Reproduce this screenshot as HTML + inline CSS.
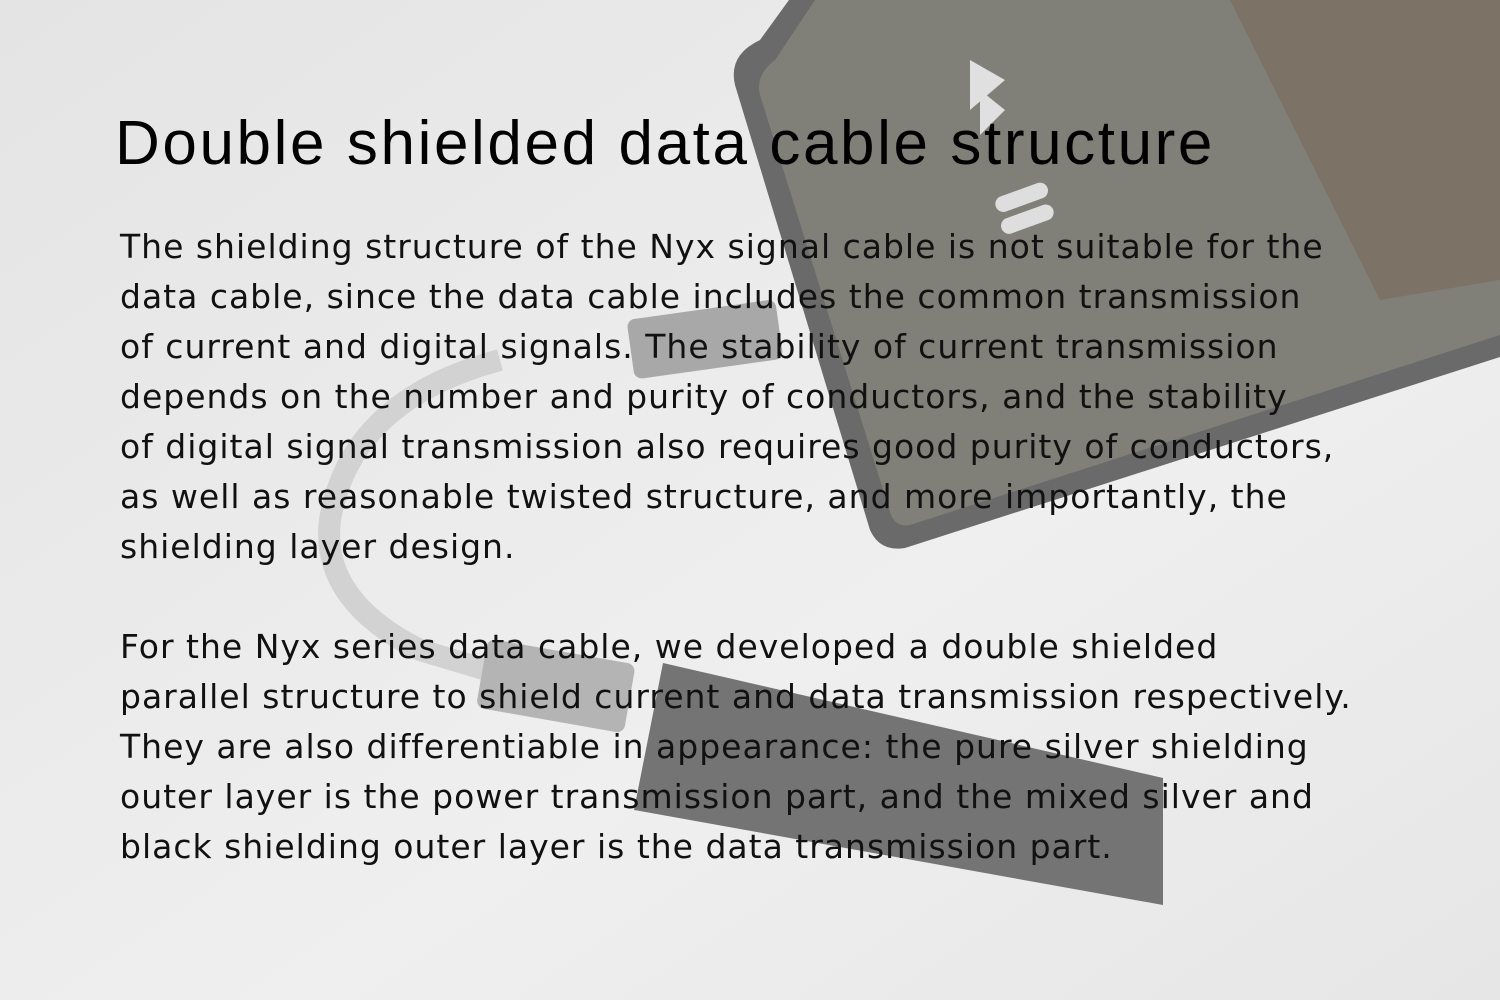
<!DOCTYPE html>
<html><head><meta charset="utf-8"><style>
html,body{margin:0;padding:0}
body{width:1500px;height:1000px;position:relative;overflow:hidden;background:#ebebeb}
svg{position:absolute;left:0;top:0}
h1{position:absolute;left:115px;top:108px;margin:0;font-family:"Liberation Sans",sans-serif;font-weight:normal;font-size:62px;color:#000;white-space:nowrap;letter-spacing:2.6px}
.t{position:absolute;left:120px;font-family:"DejaVu Sans","Liberation Sans",sans-serif;font-size:33px;line-height:50px;color:#111;white-space:pre;letter-spacing:1px}
</style></head><body>
<svg width="1500" height="1000">
<defs><linearGradient id="bg" x1="0" y1="0" x2="1" y2="1"><stop offset="0" stop-color="#e4e4e4"/><stop offset="0.6" stop-color="#efefef"/><stop offset="1" stop-color="#e6e6e6"/></linearGradient></defs>
<rect width="1500" height="1000" fill="url(#bg)"/>
<path d="M789,0 L1500,0 L1500,357 L905,548 Q880,552 870,530 L735,85 Q728,55 760,40 Z" fill="#6a6a6a"/>
<path d="M815,0 L1500,0 L1500,335 L910,525 Q895,528 890,512 L760,95 Q755,75 775,60 Z" fill="#807f78"/>
<path d="M1230,0 L1500,0 L1500,280 L1380,300 Z" fill="#7d7266"/>
<path d="M500,360 Q350,400 330,520 Q320,600 420,650 L520,680" stroke="#d2d2d2" stroke-width="22" fill="none"/>
<rect x="630" y="310" width="150" height="60" rx="8" fill="#a8a8a8" transform="rotate(-8 700 340)"/>
<path d="M663,663 L1163,778 L1163,905 L634,810 Z" fill="#747474"/>
<rect x="480" y="650" width="150" height="70" rx="8" fill="#b4b4b4" transform="rotate(10 550 690)"/>
<path d="M970,60 L1005,80 L970,110 Z M980,90 L1005,110 L980,135 Z" fill="#e0e0e0"/>
<rect x="995" y="190" width="55" height="16" rx="8" fill="#dedede" transform="rotate(-20 1020 200)"/>
<rect x="1000" y="212" width="55" height="16" rx="8" fill="#dedede" transform="rotate(-20 1025 220)"/>
</svg>
<h1>Double shielded data cable structure</h1>
<div class="t" style="top:222px">The shielding structure of the Nyx signal cable is not suitable for the
data cable, since the data cable includes the common transmission
of current and digital signals. The stability of current transmission
depends on the number and purity of conductors, and the stability
of digital signal transmission also requires good purity of conductors,
as well as reasonable twisted structure, and more importantly, the
shielding layer design.

For the Nyx series data cable, we developed a double shielded
parallel structure to shield current and data transmission respectively.
They are also differentiable in appearance: the pure silver shielding
outer layer is the power transmission part, and the mixed silver and
black shielding outer layer is the data transmission part.</div>
</body></html>
